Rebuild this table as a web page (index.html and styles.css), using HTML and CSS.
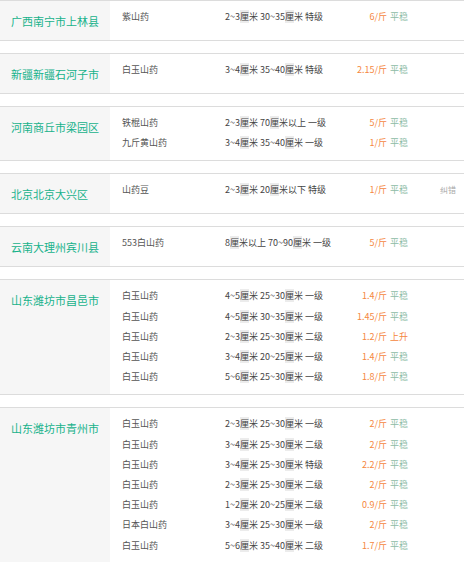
FILE: index.html
```html
<!DOCTYPE html>
<html lang="zh-CN">
<head>
<meta charset="utf-8">
<title>山药价格</title>
<link rel="stylesheet" href="styles.css">
</head>
<body>
<div class="list">
  <section class="block">
    <div class="city">广西南宁市上林县</div>
    <div class="rows">
      <div class="row"><span class="name">紫山药</span><span class="spec">2~3<i>厘</i>米 30~35<i>厘</i>米 特级</span><span class="price">6/斤</span><span class="trend">平稳</span></div>
    </div>
  </section>
  <section class="block">
    <div class="city">新疆新疆石河子市</div>
    <div class="rows">
      <div class="row"><span class="name">白玉山药</span><span class="spec">3~4<i>厘</i>米 35~40<i>厘</i>米 特级</span><span class="price">2.15/斤</span><span class="trend">平稳</span></div>
    </div>
  </section>
  <section class="block">
    <div class="city">河南商丘市梁园区</div>
    <div class="rows">
      <div class="row"><span class="name">铁棍山药</span><span class="spec">2~3<i>厘</i>米 70<i>厘</i>米以上 一级</span><span class="price">5/斤</span><span class="trend">平稳</span></div>
      <div class="row"><span class="name">九斤黄山药</span><span class="spec">3~4<i>厘</i>米 35~40<i>厘</i>米 一级</span><span class="price">1/斤</span><span class="trend">平稳</span></div>
    </div>
  </section>
  <section class="block">
    <div class="city">北京北京大兴区</div>
    <div class="rows">
      <div class="row"><span class="name">山药豆</span><span class="spec">2~3<i>厘</i>米 20<i>厘</i>米以下 特级</span><span class="price">1/斤</span><span class="trend">平稳</span><span class="fix">纠错</span></div>
    </div>
  </section>
  <section class="block">
    <div class="city">云南大理州宾川县</div>
    <div class="rows">
      <div class="row"><span class="name">553白山药</span><span class="spec">8<i>厘</i>米以上 70~90<i>厘</i>米 一级</span><span class="price">5/斤</span><span class="trend">平稳</span></div>
    </div>
  </section>
  <section class="block">
    <div class="city">山东潍坊市昌邑市</div>
    <div class="rows">
      <div class="row"><span class="name">白玉山药</span><span class="spec">4~5<i>厘</i>米 25~30<i>厘</i>米 一级</span><span class="price">1.4/斤</span><span class="trend">平稳</span></div>
      <div class="row"><span class="name">白玉山药</span><span class="spec">4~5<i>厘</i>米 30~35<i>厘</i>米 一级</span><span class="price">1.45/斤</span><span class="trend">平稳</span></div>
      <div class="row"><span class="name">白玉山药</span><span class="spec">2~3<i>厘</i>米 25~30<i>厘</i>米 二级</span><span class="price">1.2/斤</span><span class="trend up">上升</span></div>
      <div class="row"><span class="name">白玉山药</span><span class="spec">3~4<i>厘</i>米 20~25<i>厘</i>米 一级</span><span class="price">1.4/斤</span><span class="trend">平稳</span></div>
      <div class="row"><span class="name">白玉山药</span><span class="spec">5~6<i>厘</i>米 25~30<i>厘</i>米 一级</span><span class="price">1.8/斤</span><span class="trend">平稳</span></div>
    </div>
  </section>
  <section class="block">
    <div class="city">山东潍坊市青州市</div>
    <div class="rows">
      <div class="row"><span class="name">白玉山药</span><span class="spec">2~3<i>厘</i>米 25~30<i>厘</i>米 一级</span><span class="price">2/斤</span><span class="trend">平稳</span></div>
      <div class="row"><span class="name">白玉山药</span><span class="spec">3~4<i>厘</i>米 25~30<i>厘</i>米 二级</span><span class="price">2/斤</span><span class="trend">平稳</span></div>
      <div class="row"><span class="name">白玉山药</span><span class="spec">3~4<i>厘</i>米 25~30<i>厘</i>米 特级</span><span class="price">2.2/斤</span><span class="trend">平稳</span></div>
      <div class="row"><span class="name">白玉山药</span><span class="spec">2~3<i>厘</i>米 25~30<i>厘</i>米 二级</span><span class="price">2/斤</span><span class="trend">平稳</span></div>
      <div class="row"><span class="name">白玉山药</span><span class="spec">1~2<i>厘</i>米 20~25<i>厘</i>米 二级</span><span class="price">0.9/斤</span><span class="trend">平稳</span></div>
      <div class="row"><span class="name">日本白山药</span><span class="spec">3~4<i>厘</i>米 25~30<i>厘</i>米 一级</span><span class="price">2/斤</span><span class="trend">平稳</span></div>
      <div class="row"><span class="name">白玉山药</span><span class="spec">5~6<i>厘</i>米 35~40<i>厘</i>米 二级</span><span class="price">1.7/斤</span><span class="trend">平稳</span></div>
    </div>
  </section>
</div>
</body>
</html>
```

FILE: styles.css
```css
html, body {
  margin: 0;
  padding: 0;
  background: #fff;
}

body {
  font-family: "Noto Sans CJK SC", "Noto Sans", sans-serif;
  color: #444;
}

.list {
  display: flex;
  flex-direction: column;
  gap: 12px;
}

.block {
  display: flex;
  border-top: 1px solid #dcdcdc;
  border-bottom: 1px solid #dcdcdc;
}

.city {
  width: 110px;
  flex: none;
  box-sizing: border-box;
  padding: 13px 0 12px 11px;
  background: #f6f6f6;
  color: #16b28b;
  font-size: 11px;
  line-height: 14px;
  white-space: nowrap;
}

.rows {
  flex: 1;
  padding: 6px 0 7px 12px;
}

.row {
  display: grid;
  grid-template-columns: 103px 110px 52px 53px auto;
  align-items: center;
  height: 20.2px;
  font-size: 9px;
  line-height: 12px;
  white-space: nowrap;
}

.name {
  color: #555;
}

.spec {
  color: #444;
}

.spec i {
  font-style: normal;
  background: #ececec;
}

.price {
  text-align: right;
  color: #f5873e;
}

.trend {
  padding-left: 3px;
  color: #8dbba6;
}

.trend.up {
  color: #f5873e;
}

.fix {
  font-size: 8px;
  color: #a8a8a8;
}
```
